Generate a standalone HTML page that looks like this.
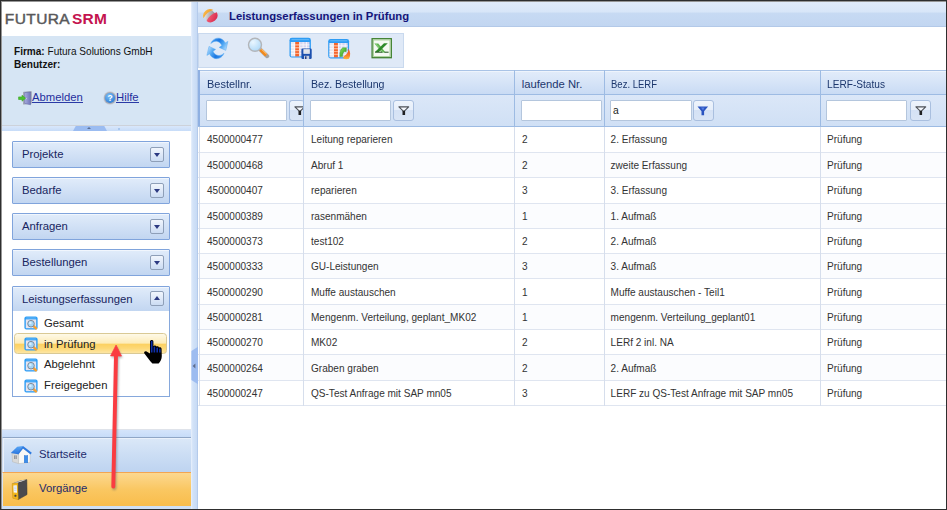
<!DOCTYPE html>
<html lang="de">
<head>
<meta charset="utf-8">
<title>FUTURA SRM - Leistungserfassungen in Prüfung</title>
<style>
*{box-sizing:border-box;margin:0;padding:0}
html,body{width:947px;height:510px;overflow:hidden;background:#fff}
body{font-family:"Liberation Sans",sans-serif;position:relative;color:#333}
.abs{position:absolute}
#frame{position:absolute;left:0;top:0;width:947px;height:510px;border:1px solid #2e2e2e;box-shadow:inset 1px 1px 0 rgba(46,46,46,.5);z-index:50;pointer-events:none}
/* left panel */
#logo{left:2px;top:2px;width:189px;height:34px;background:#fff}
#logo span{position:absolute;top:6.2px;font-size:15.5px;line-height:22px;letter-spacing:.3px;-webkit-text-stroke:.45px currentColor}
#info{left:2px;top:36px;width:189px;height:90px;background:#d6e5f4}
#info .t{position:absolute;left:12px;font-size:10.05px;line-height:13px;color:#111;white-space:nowrap}
#info a{position:absolute;font-size:11.3px;line-height:9px;height:10px;color:#1f2f9e;text-decoration:none;border-bottom:1px solid #2a3aa6;white-space:nowrap}
#hsplit{left:2px;top:125px;width:189px;height:7px;background:linear-gradient(#d9e7fb,#c7dcf8);border-top:1px solid #cdd2da;border-bottom:1px solid #c3d6f0}
#hsplit i{position:absolute;left:71px;top:0;width:34px;height:5px;background:#9bbcf1;clip-path:polygon(8% 0,92% 0,100% 100%,0 100%)}
#hsplit s{display:block;width:0;height:0;position:absolute;left:85px;top:1px;border:2.5px solid transparent;border-bottom:2.5px solid #5a6f96;border-top:0}
#hsplit u{display:block;text-decoration:none;position:absolute;left:116px;top:2px;width:2px;height:2px;background:#a9c7ee}
#nav{left:2px;top:131px;width:189px;height:299px;background:#fff}
.nb{position:absolute;left:10px;width:158px;height:27px;border:1px solid #80a4dc;border-radius:1px;box-shadow:inset 0 1px 0 #f1f6fd;background:linear-gradient(#e1ecfa 0%,#d3e2f6 45%,#c2d6f1 100%);font-size:11.3px;line-height:25px;color:#182560;padding-left:9px;white-space:nowrap}
.nb b{position:absolute;right:5px;top:5px;width:14px;height:15px;border:1px solid #8e9fb8;border-radius:2px;background:linear-gradient(#f1f6fd,#dfe9f8 50%,#cbdcf3)}
.nb b:after{content:"";position:absolute;left:2.5px;top:5px;border:3.5px solid transparent;border-top:4px solid #2c3a82;border-bottom:0}
.nb b.up:after{border-top:0;border-bottom:4px solid #2c3a82;top:4px}
#lebody{left:10px;top:180px;width:158px;height:86px;border:1px solid #86a8dc;border-top:0;background:#fff}
.ni{position:absolute;left:31px;font-size:11.3px;line-height:14px;color:#222;white-space:nowrap}
#hl{left:1px;top:22px;width:153.4px;height:21px;border:1px solid #d9c995;border-radius:3.5px;background:linear-gradient(#fef9e8 0%,#fdecb8 49%,#fcd060 52%,#fdd875 75%,#fde6a4 100%)}
#botbar{left:2px;top:429px;width:189px;height:9px;background:linear-gradient(#d4e4fb,#c5dbf8);border-top:1px solid #dfe3ea}
#start{left:2px;top:437px;width:189px;height:36px;background:linear-gradient(#dbe8f8 0%,#cbddf4 50%,#bdd3f0 100%);border-top:1px solid #8fa6c6;border-left:1px solid #cfdcf0;box-shadow:inset 1px 1px 0 #eaf1fb}
#vorg{left:2px;top:472px;width:189px;height:34px;background:linear-gradient(#fcd890 0%,#fac762 50%,#f9bd4b 100%);border-top:1px solid #f3a552;border-left:1px solid #d9e3f2}
#start span,#vorg span{position:absolute;left:36px;font-size:11.3px;line-height:14px;color:#1d2a6c}
#botline{left:2px;top:506px;width:189px;height:3px;background:#cfe0f5}
/* vertical splitter */
#vsplit{left:191px;top:2px;width:7px;height:507px;background:linear-gradient(90deg,#e9f1fc 0,#d3e3f8 25%,#c8dbf5 80%,#a9c1e5 100%)}
/* main */
#title{left:198px;top:2px;width:748px;height:25px;background:linear-gradient(#e0ebfa 0%,#d8e6f8 41%,#c7daf3 47%,#c2d6f1 100%);border-bottom:1px solid #b3c9e8}
#title span{position:absolute;left:31px;top:5.7px;font-size:11.3px;line-height:16px;font-weight:bold;color:#15157a;white-space:nowrap;}
#tool{left:198px;top:33px;width:206px;height:35px;background:#dfe9f7;border:1px solid #c9d9ee}
#grid{left:198px;top:70px;width:748px;height:337px}
#ghead{left:0;top:0;width:748px;height:25px;background:linear-gradient(#e2ecfa 0%,#d6e4f7 50%,#c9dbf4 100%);box-shadow:inset 0 1px 0 #eef4fc;border-top:1px solid #a9c3e6;border-bottom:1px solid #9dbbe3}
#gfilt{left:0;top:25px;width:748px;height:32px;background:linear-gradient(#dbe7f8,#d0e0f5);border-bottom:1px solid #9dbbe3}
.hc{position:absolute;top:0;height:56px;border-left:1px solid #9dbbe3}
.hc span{position:absolute;left:6px;top:6.5px;font-size:11.25px;line-height:15px;color:#1c376d;white-space:nowrap;transform-origin:0 50%}
.fi{position:absolute;top:30px;height:21px;width:81px;background:#fff;border:1px solid #b4c6dd;border-radius:1px;font-size:10.3px;line-height:19px;padding-left:3px;color:#222}
.fb{position:absolute;top:30px;height:21px;width:21px;border:1px solid #a9bfdf;border-radius:3px;background:linear-gradient(#eef4fc 0,#e6eefa 48%,#d5e2f5 50%,#d9e5f6 100%)}
.row{position:absolute;left:0;width:748px;height:25.35px;border-bottom:1px solid #dfe5f0;background:#fff}
.row.alt{background:#fbfcfe}
.row span{position:absolute;top:6.2px;font-size:10.05px;line-height:13px;color:#333;white-space:nowrap}
.vl{position:absolute;top:57px;width:1px;height:279px;background:#d6deec}
</style>
</head>
<body>
<!-- LEFT -->
<div id="logo" class="abs"><span style="left:2.8px;color:#58585a;letter-spacing:.4px">FUTURA</span><span style="left:70px;color:#c4134f;font-weight:bold;-webkit-text-stroke:0;letter-spacing:.2px">SRM</span></div>
<div id="info" class="abs">
  <div class="t" style="top:9px"><b>Firma:</b> Futura Solutions GmbH</div>
  <div class="t" style="top:22px"><b>Benutzer:</b></div>
  <a style="left:30px;top:57px">Abmelden</a>
  <a style="left:114px;top:57px">Hilfe</a>
</div>
<div id="hsplit" class="abs"><i></i><s></s><u></u></div>
<div id="nav" class="abs">
  <div class="nb" style="top:10px">Projekte<b></b></div>
  <div class="nb" style="top:46px">Bedarfe<b></b></div>
  <div class="nb" style="top:82px">Anfragen<b></b></div>
  <div class="nb" style="top:118px">Bestellungen<b></b></div>
  <div class="nb" style="top:155px;height:26px;line-height:24px">Leistungserfassungen<b class="up" style="top:4px"></b></div>
  <div id="lebody" class="abs">
    <div id="hl" class="abs"></div>
    <div class="ni" style="top:4.5px">Gesamt</div>
    <div class="ni" style="top:25.5px">in Prüfung</div>
    <div class="ni" style="top:46.3px">Abgelehnt</div>
    <div class="ni" style="top:67.2px">Freigegeben</div>
  </div>
</div>
<div id="botbar" class="abs"></div>
<div id="start" class="abs"><span style="top:8.7px">Startseite</span></div>
<div id="vorg" class="abs"><span style="top:8px">Vorgänge</span></div>
<div id="botline" class="abs"></div>
<div id="vsplit" class="abs"></div>
<!-- MAIN -->
<div id="title" class="abs"><span>Leistungserfassungen in Prüfung</span></div>
<div id="tool" class="abs"></div>
<div id="grid" class="abs">
  <div id="ghead" class="abs"></div>
  <div id="gfilt" class="abs"></div>
  <div class="hc" style="left:0;width:106px;border-left:2px solid #8fb0e2"><span style="left:6.8px;transform:scaleX(.975)">Bestellnr.</span><div class="fi" style="left:6px"></div><div class="fb" style="left:89px;width:15px;border-right:0;overflow:hidden"><svg style="position:absolute;left:3.6px;top:5px" width="12" height="10" viewBox="0 0 12 10"><path d="M.9 .9 H10.7 L5.8 5.6 Z" fill="#f4f7fc" stroke="#4d5158" stroke-width="1.1" stroke-linejoin="round"/><path d="M4.5 4.8 H7.1 V9 H4.5 Z" fill="#1e1f22"/></svg></div></div>
  <div class="hc" style="left:105px;width:211px"><span style="left:6.5px;transform:scaleX(.94)">Bez. Bestellung</span><div class="fi" style="left:6px"></div><div class="fb" style="left:89px"><svg style="position:absolute;left:3.6px;top:5px" width="12" height="10" viewBox="0 0 12 10"><path d="M.9 .9 H10.7 L5.8 5.6 Z" fill="#f4f7fc" stroke="#4d5158" stroke-width="1.1" stroke-linejoin="round"/><path d="M4.5 4.8 H7.1 V9 H4.5 Z" fill="#1e1f22"/></svg></div></div>
  <div class="hc" style="left:316px;width:90px"><span style="left:6.7px">laufende Nr.</span><div class="fi" style="left:6px;width:81px"></div></div>
  <div class="hc" style="left:406px;width:217px"><span style="left:6.3px;transform:scaleX(.845)">Bez. LERF</span><div class="fi" style="left:5px;width:82px;padding-left:2px">a</div><div class="fb" style="left:88px"><svg style="position:absolute;left:3.4px;top:5px" width="12" height="10" viewBox="0 0 12 10"><path d="M.5 .6 H11.1 L7.1 5.2 V9.2 H4.5 V5.2 Z" fill="#2a54c0"/><path d="M4 1.4 H7.6 L6 4.4 Z" fill="#5f88ea" opacity=".8"/></svg></div></div>
  <div class="hc" style="left:622px;width:126px"><span style="left:6px;transform:scaleX(.9)">LERF-Status</span><div class="fi" style="left:5px"></div><div class="fb" style="left:89px"><svg style="position:absolute;left:3.6px;top:5px" width="12" height="10" viewBox="0 0 12 10"><path d="M.9 .9 H10.7 L5.8 5.6 Z" fill="#f4f7fc" stroke="#4d5158" stroke-width="1.1" stroke-linejoin="round"/><path d="M4.5 4.8 H7.1 V9 H4.5 Z" fill="#1e1f22"/></svg></div></div>
  <div id="rows">
<div class="row" style="top:57.00px;height:26.00px"><span style="left:9px">4500000477</span><span style="left:113px">Leitung reparieren</span><span style="left:324px">2</span><span style="left:412.6px">2. Erfassung</span><span style="left:629px">Prüfung</span></div>
<div class="row alt" style="top:83.00px;height:25.30px"><span style="left:9px">4500000468</span><span style="left:113px">Abruf 1</span><span style="left:324px">2</span><span style="left:412.6px">zweite Erfassung</span><span style="left:629px">Prüfung</span></div>
<div class="row" style="top:108.30px;height:25.30px"><span style="left:9px">4500000407</span><span style="left:113px">reparieren</span><span style="left:324px">3</span><span style="left:412.6px">3. Erfassung</span><span style="left:629px">Prüfung</span></div>
<div class="row alt" style="top:133.60px;height:25.30px"><span style="left:9px">4500000389</span><span style="left:113px">rasenmähen</span><span style="left:324px">1</span><span style="left:412.6px">1. Aufmaß</span><span style="left:629px">Prüfung</span></div>
<div class="row" style="top:158.90px;height:25.30px"><span style="left:9px">4500000373</span><span style="left:113px">test102</span><span style="left:324px">2</span><span style="left:412.6px">2. Aufmaß</span><span style="left:629px">Prüfung</span></div>
<div class="row alt" style="top:184.20px;height:25.30px"><span style="left:9px">4500000333</span><span style="left:113px">GU-Leistungen</span><span style="left:324px">3</span><span style="left:412.6px">3. Aufmaß</span><span style="left:629px">Prüfung</span></div>
<div class="row" style="top:209.50px;height:25.30px"><span style="left:9px">4500000290</span><span style="left:113px">Muffe austauschen</span><span style="left:324px">1</span><span style="left:412.6px">Muffe austauschen - Teil1</span><span style="left:629px">Prüfung</span></div>
<div class="row alt" style="top:234.80px;height:25.30px"><span style="left:9px">4500000281</span><span style="left:113px">Mengenm. Verteilung, geplant_MK02</span><span style="left:324px">1</span><span style="left:412.6px">mengenm. Verteilung_geplant01</span><span style="left:629px">Prüfung</span></div>
<div class="row" style="top:260.10px;height:25.30px"><span style="left:9px">4500000270</span><span style="left:113px">MK02</span><span style="left:324px">2</span><span style="left:412.6px">LERf 2 inl. NA</span><span style="left:629px">Prüfung</span></div>
<div class="row alt" style="top:285.40px;height:25.30px"><span style="left:9px">4500000264</span><span style="left:113px">Graben graben</span><span style="left:324px">2</span><span style="left:412.6px">2. Aufmaß</span><span style="left:629px">Prüfung</span></div>
<div class="row" style="top:310.70px;height:25.30px"><span style="left:9px">4500000247</span><span style="left:113px">QS-Test Anfrage mit SAP mn05</span><span style="left:324px">3</span><span style="left:412.6px">LERF zu QS-Test Anfrage mit SAP mn05</span><span style="left:629px">Prüfung</span></div>
<div class="vl" style="left:1px"></div>
<div class="vl" style="left:105px"></div>
<div class="vl" style="left:316px"></div>
<div class="vl" style="left:406px"></div>
<div class="vl" style="left:622px"></div>
</div><!--/rows-->
</div>

<!-- ICONS -->
<svg class="abs" style="left:17px;top:89.6px" width="16" height="17" viewBox="0 0 16 17">
  <defs><linearGradient id="dr" x1="0" y1="0" x2="1" y2="0"><stop offset="0" stop-color="#a9aee0"/><stop offset="1" stop-color="#6f73b8"/></linearGradient></defs>
  <path d="M6.5 2.2 L14.3 1.6 L14.3 13.2 L6.5 14.2 Z" fill="#b9bcc6" stroke="#8c8f9c" stroke-width=".6"/>
  <path d="M7.6 2.6 L13.6 2 L13.6 14.8 L7.6 13.4 Z" fill="url(#dr)" stroke="#5f639f" stroke-width=".5"/>
  <circle cx="9" cy="8.6" r=".7" fill="#e8e8f4"/>
  <path d="M1.6 6.9 H5 V5.2 L8.6 8.2 L5 11.2 V9.5 H1.6 Z" fill="#4cc22e" stroke="#3aa622" stroke-width=".6" stroke-linejoin="round"/>
</svg>
<svg class="abs" style="left:102.8px;top:90.8px" width="14" height="14" viewBox="0 0 14 14">
  <defs><radialGradient id="hp" cx=".4" cy=".3" r=".8"><stop offset="0" stop-color="#7cc0f7"/><stop offset="1" stop-color="#2a78d2"/></radialGradient></defs>
  <circle cx="7" cy="7" r="6.7" fill="#c9ced8"/><circle cx="7" cy="7" r="6" fill="#a4aab6"/>
  <circle cx="7" cy="7" r="5" fill="url(#hp)"/>
  <text x="7" y="10" font-family="Liberation Sans,sans-serif" font-size="8.5" font-weight="bold" fill="#fff" text-anchor="middle">?</text>
</svg>
<svg class="abs" style="left:202px;top:8px" width="16" height="16" viewBox="0 0 16 16">
  <defs>
    <linearGradient id="sg" x1="0" y1="0" x2="1" y2="1"><stop offset="0" stop-color="#f4f4f4"/><stop offset=".45" stop-color="#b9b9bc"/><stop offset="1" stop-color="#808188"/></linearGradient>
    <linearGradient id="rg" x1="0" y1="0" x2="1" y2="1"><stop offset="0" stop-color="#f4627a"/><stop offset="1" stop-color="#d21f45"/></linearGradient>
    <linearGradient id="og" x1="0" y1="0" x2="1" y2="1"><stop offset="0" stop-color="#f9bf55"/><stop offset="1" stop-color="#f29a22"/></linearGradient>
  </defs>
  <g transform="rotate(-40 8 8)">
    <circle cx="8" cy="8" r="5.6" fill="url(#sg)"/>
    <path d="M1.6 5.6 A6.8 6.8 0 0 1 14.4 5.6 Q8 2.6 1.6 5.6 Z" fill="url(#og)"/>
    <path d="M1.3 8.6 Q8 5.6 14.7 8.6 A6.9 6.9 0 0 1 1.3 8.6 Z" fill="url(#rg)" transform="translate(.9 .9)"/>
  </g>
</svg>
<!-- nav icons -->
<svg class="abs" style="left:24px;top:316.2px" width="14" height="14" viewBox="0 0 14 14">
  <rect x=".4" y=".4" width="13.2" height="13.2" rx="2" fill="#2e9df5"/>
  <rect x="1.8" y="3.4" width="10.4" height="8.8" fill="#e6e5f0"/>
  <path d="M2.2 2H11.8" stroke="#7cc4fb" stroke-width=".7"/>
  <path d="M9.6 10.2 L11.9 12.3" stroke="#f5a030" stroke-width="2.5" stroke-linecap="round"/>
  <circle cx="7" cy="7.7" r="3.3" fill="#a4d6f8" stroke="#7a8290" stroke-width=".9"/>
  <circle cx="6.3" cy="6.9" r="1.3" fill="#d8eefd"/>
</svg>
<svg class="abs" style="left:24px;top:337.1px" width="14" height="14" viewBox="0 0 14 14">
  <rect x=".4" y=".4" width="13.2" height="13.2" rx="2" fill="#2e9df5"/>
  <rect x="1.8" y="3.4" width="10.4" height="8.8" fill="#e6e5f0"/>
  <path d="M2.2 2H11.8" stroke="#7cc4fb" stroke-width=".7"/>
  <path d="M9.6 10.2 L11.9 12.3" stroke="#f5a030" stroke-width="2.5" stroke-linecap="round"/>
  <circle cx="7" cy="7.7" r="3.3" fill="#a4d6f8" stroke="#7a8290" stroke-width=".9"/>
  <circle cx="6.3" cy="6.9" r="1.3" fill="#d8eefd"/>
</svg>
<svg class="abs" style="left:24px;top:358.0px" width="14" height="14" viewBox="0 0 14 14">
  <rect x=".4" y=".4" width="13.2" height="13.2" rx="2" fill="#2e9df5"/>
  <rect x="1.8" y="3.4" width="10.4" height="8.8" fill="#e6e5f0"/>
  <path d="M2.2 2H11.8" stroke="#7cc4fb" stroke-width=".7"/>
  <path d="M9.6 10.2 L11.9 12.3" stroke="#f5a030" stroke-width="2.5" stroke-linecap="round"/>
  <circle cx="7" cy="7.7" r="3.3" fill="#a4d6f8" stroke="#7a8290" stroke-width=".9"/>
  <circle cx="6.3" cy="6.9" r="1.3" fill="#d8eefd"/>
</svg>
<svg class="abs" style="left:24px;top:378.8px" width="14" height="14" viewBox="0 0 14 14">
  <rect x=".4" y=".4" width="13.2" height="13.2" rx="2" fill="#2e9df5"/>
  <rect x="1.8" y="3.4" width="10.4" height="8.8" fill="#e6e5f0"/>
  <path d="M2.2 2H11.8" stroke="#7cc4fb" stroke-width=".7"/>
  <path d="M9.6 10.2 L11.9 12.3" stroke="#f5a030" stroke-width="2.5" stroke-linecap="round"/>
  <circle cx="7" cy="7.7" r="3.3" fill="#a4d6f8" stroke="#7a8290" stroke-width=".9"/>
  <circle cx="6.3" cy="6.9" r="1.3" fill="#d8eefd"/>
</svg>
<!-- toolbar icons -->
<svg class="abs" style="left:202px;top:34px" width="32" height="28" viewBox="0 0 32 28">
  <defs><linearGradient id="rf" gradientUnits="userSpaceOnUse" x1="9" y1="5" x2="25" y2="15"><stop offset="0" stop-color="#4aa2f4"/><stop offset=".4" stop-color="#1b76e0"/><stop offset=".68" stop-color="#4ea6f3"/><stop offset="1" stop-color="#b9defc"/></linearGradient></defs>
  <path id="rfa" d="M8.8 9.6 C10.3 5.3 14.5 3.4 18.2 4.4 C20.8 5.2 22.4 7 23.2 9 L25.9 7.4 L23.8 16.4 L17.2 13.4 L19.8 11.6 C19 9.4 17 7.6 14.6 7.3 C12.4 7.1 10.2 8.2 8.8 9.6 Z" fill="url(#rf)" stroke="#5aaaf3" stroke-width=".5" stroke-linejoin="round"/>
  <path d="M8.8 9.6 C10.3 5.3 14.5 3.4 18.2 4.4 C20.8 5.2 22.4 7 23.2 9 L25.9 7.4 L23.8 16.4 L17.2 13.4 L19.8 11.6 C19 9.4 17 7.6 14.6 7.3 C12.4 7.1 10.2 8.2 8.8 9.6 Z" fill="url(#rf)" stroke="#5aaaf3" stroke-width=".5" stroke-linejoin="round" transform="rotate(180 15.4 14.4)"/>
</svg>
<svg class="abs" style="left:246px;top:36px" width="24" height="24" viewBox="0 0 24 24">
  <defs><radialGradient id="ln" cx=".35" cy=".3" r=".8"><stop offset="0" stop-color="#eaf6ff"/><stop offset="1" stop-color="#a9d6f7"/></radialGradient></defs>
  <path d="M14.4 13.6 L21.2 20.2" stroke="#a4a4a4" stroke-width="4" stroke-linecap="round"/>
  <path d="M14.4 13.6 L20.2 19.2" stroke="#f28a1e" stroke-width="3.4" stroke-linecap="butt"/>
  <path d="M15.4 13 L20.6 18" stroke="#fdd79a" stroke-width="1"/>
  <circle cx="9" cy="8.8" r="6.5" fill="url(#ln)" stroke="#b3b5b9" stroke-width="1.4"/>
</svg>
<svg class="abs" style="left:284px;top:34px" width="32" height="28" viewBox="0 0 32 28"><rect x="5.5" y="3.8" width="21.4" height="19.8" rx="2.4" fill="#2e9cf4"/><path d="M7.5 5.7H24.9" stroke="#7cc6fb" stroke-width=".7"/><rect x="6.9" y="8" width="18.6" height="14.3" fill="#d6d6f0"/><rect x="6.9" y="8" width="3.6" height="14.3" fill="#e8e8f0"/><rect x="11.1" y="8" width="4.2" height="14.3" fill="#f4652c"/><path d="M6.9 10.86H25.5M6.9 13.72H25.5M6.9 16.58H25.5M6.9 19.44H25.5M10.7 8V22.3M15.7 8V22.3M19.1 8V22.3M22.5 8V22.3" stroke="#fff" stroke-width=".8" opacity=".9"/><path d="M11.1 10.86H15.3M11.1 13.72H15.3M11.1 16.58H15.3M11.1 19.44H15.3" stroke="#fca77e" stroke-width=".8"/>
  <rect x="17.4" y="14.6" width="10.3" height="10.4" rx="1.2" fill="#1c50ae"/>
  <rect x="19.4" y="15.2" width="6.4" height="4.6" fill="#eef0f4"/>
  <path d="M20.2 17H25M20.2 18.4H25" stroke="#c9ccd6" stroke-width=".5"/>
  <rect x="20" y="21.8" width="5.2" height="3.2" fill="#c9d0df"/>
  <rect x="21" y="22.3" width="1.5" height="2.7" fill="#223f86"/>
</svg>
<svg class="abs" style="left:323px;top:34px" width="32" height="28" viewBox="0 0 32 28"><rect x="5.2" y="4.9" width="20.9" height="19.6" rx="2.4" fill="#2e9cf4"/><path d="M7.2 6.8H24.1" stroke="#7cc6fb" stroke-width=".7"/><rect x="6.6" y="9" width="18.1" height="14.2" fill="#d6d6f0"/><rect x="6.6" y="9" width="3.6" height="14.2" fill="#e8e8f0"/><rect x="10.8" y="9" width="4.2" height="14.2" fill="#f4652c"/><path d="M6.6 11.84H24.7M6.6 14.68H24.7M6.6 17.52H24.7M6.6 20.36H24.7M10.4 9V23.2M15.4 9V23.2M18.8 9V23.2M22.2 9V23.2" stroke="#fff" stroke-width=".8" opacity=".9"/><path d="M10.8 11.84H15M10.8 14.68H15M10.8 17.52H15M10.8 20.36H15" stroke="#fca77e" stroke-width=".8"/>
  <defs><linearGradient id="ga" x1="0" y1="0" x2="1" y2="1"><stop offset="0" stop-color="#8be860"/><stop offset="1" stop-color="#1f8f1c"/></linearGradient>
  <linearGradient id="fl" x1="0" y1="0" x2="0" y2="1"><stop offset="0" stop-color="#ef4a20"/><stop offset=".6" stop-color="#f7792a"/><stop offset="1" stop-color="#fbb83a"/></linearGradient></defs>
  <path d="M16.8 22.6 C16.6 18.4 17.6 15 19.6 13.8 H23.4 L23.2 17.8 L21.4 17.6 C20 18.4 19.6 20.4 19.4 22.6 Z" fill="url(#ga)" stroke="#2a8a22" stroke-width=".4"/>
  <path d="M20.4 24.8 C19.8 22.4 21.6 21.6 23.4 20.2 C25 18.8 25.6 16.8 25.2 14.6 C27.6 17.6 27.8 21.8 26 24.8 C24.4 25.4 22 25.4 20.4 24.8 Z" fill="url(#fl)"/>
</svg>
<svg class="abs" style="left:366px;top:34px" width="32" height="28" viewBox="0 0 32 28">
  <rect x="6.1" y="4.7" width="19.2" height="19" fill="#f5f9f2" stroke="#3f7f2e" stroke-width="1.3"/>
  <rect x="7.4" y="6" width="16.6" height="16.4" fill="none" stroke="#9ccb8a" stroke-width=".8"/>
  <path d="M8.4 9.5 H12.3 L19.6 18.6 H15.8 Z" fill="#62b552"/>
  <path d="M9.6 9.8 L17 18.4" stroke="#a5dc96" stroke-width=".8"/>
  <path d="M21.8 9.3 H18 L9 18 H12.8 Z" fill="#2f8a2a"/>
  <path d="M9 18.2 H16.4 M18.4 18.2 H22.6" stroke="#1d521b" stroke-width="1"/>
</svg>

<!-- splitter handle -->
<svg class="abs" style="left:191px;top:346px" width="8" height="39" viewBox="0 0 8 39">
  <path d="M.4 5 L7 .8 V38.2 L.4 34 Z" fill="#9dbcf0"/>
  <path d="M1.6 20 L4.4 17.6 V22.4 Z" fill="#5f6e8e"/>
</svg>
<!-- bottom icons -->
<svg class="abs" style="left:10px;top:445px" width="23" height="20" viewBox="0 0 23 20">
  <defs><linearGradient id="rfb" x1="0" y1="0" x2="0" y2="1"><stop offset="0" stop-color="#5aa8f6"/><stop offset="1" stop-color="#2b76de"/></linearGradient></defs>
  <path d="M2 8 L2.5 16.8 L8.6 18.6 L8.6 8 Z" fill="#d9d9d8" stroke="#b4b4b2" stroke-width=".5"/>
  <path d="M8.6 18.6 L8.6 8.4 L13 3.2 L20.2 8.6 L20 17.4 Z" fill="#f8f8f6" stroke="#bcbcba" stroke-width=".5"/>
  <path d="M.8 8 L7.2 1.8 L13 .9 L8 9.2 Z" fill="url(#rfb)"/>
  <path d="M13 .9 L21.8 7.8 L20.6 9.4 L13 3.6 L8.4 9.6 L7.4 8.6 Z" fill="#2f7be0"/>
  <rect x="14.2" y="10.6" width="3.6" height="7.2" fill="#3c8ee9" stroke="#2a6fd0" stroke-width=".4"/>
  <rect x="4" y="10.4" width="2.8" height="3.6" fill="#90939a"/>
  <path d="M5.4 10.4V14" stroke="#d9d9d8" stroke-width=".5"/>
</svg>
<svg class="abs" style="left:11px;top:478px" width="18" height="23" viewBox="0 0 18 23">
  <path d="M6.8 4.6 L15.8 1.6 L16 16.6 L7.2 21.6 Z" fill="#4a4a4e" stroke="#2f2f32" stroke-width=".5"/>
  <path d="M1.2 5.6 L6.8 4.6 L7.2 21.6 L1.8 20.2 Z" fill="#f3b81e" stroke="#c48c0a" stroke-width=".5"/>
  <path d="M1.2 5.6 L9.6 2.2 L15.8 1.6 L6.8 4.6 Z" fill="#8a8a8e"/>
  <path d="M3.4 5 L11.4 2.4 L14.6 2.2 L6.6 4.4 Z" fill="#f2f2f2"/>
  <path d="M2.4 7.6 L5.8 7.2 L6 14.8 L2.7 14.4 Z" fill="#f4f6fb"/>
  <path d="M3 9.2L5.4 9M3 10.8L5.4 10.6M3.1 12.4L5.5 12.2" stroke="#a9c4ec" stroke-width=".6"/>
  <circle cx="4.4" cy="17.8" r="1.1" fill="#3a3a52" stroke="#b98308" stroke-width=".4"/>
</svg>
<!-- red arrow -->
<svg class="abs" style="left:104px;top:340px" width="26" height="158" viewBox="0 0 26 158">
  <defs><filter id="ash" x="-80%" y="-10%" width="260%" height="120%"><feGaussianBlur stdDeviation="1.3"/></filter></defs>
  <g opacity=".45" filter="url(#ash)" transform="translate(1 1.8)"><path d="M9.3 146.5 L12 15" stroke="#5a5a5a" stroke-width="4" stroke-linecap="round"/><path d="M12.1 4.8 L6.3 16 L17.6 16.2 Z" fill="#5a5a5a"/></g>
  <path d="M9.3 146.5 L12 15" stroke="#fa3c41" stroke-width="3.9" stroke-linecap="round"/>
  <path d="M12.1 5 L6.5 15.9 L17.5 16.1 Z" fill="#fa3c41" stroke="#fa3c41" stroke-width=".7" stroke-linejoin="round"/>
</svg>
<!-- cursor -->
<svg class="abs" style="left:143px;top:339px" width="21" height="26" viewBox="0 0 21 26">
  <path d="M7 14.4 V2.4 C7 .4 10.4 .4 10.4 2.4 V7.2 C11 6.2 13 6.4 13.2 7.6 C14 6.8 15.8 7.2 16 8.6 C17 8 18.6 8.6 18.6 10 L18.8 17 C18.8 20.4 17.4 22.6 15.6 24.4 H9.4 C6.4 21.6 4.4 18.6 1.4 14.6 C.4 13 2.2 11.6 3.6 12.6 Z" fill="#000"/>
  <path d="M7.9 13.6 V2.6 C7.9 1.6 9.5 1.6 9.5 2.6 V13.6 Z M10.6 8.2 C10.6 7.4 12.2 7.4 12.2 8.2 V13.6 H10.6 Z M13.4 9 C13.4 8.2 15 8.2 15 9 V13.6 H13.4 Z M16.1 10.2 C16.1 9.4 17.6 9.4 17.6 10.2 V13.6 H16.1 Z" fill="#0f2fa8"/>
</svg>
<div id="frame"></div>
</body>
</html>
